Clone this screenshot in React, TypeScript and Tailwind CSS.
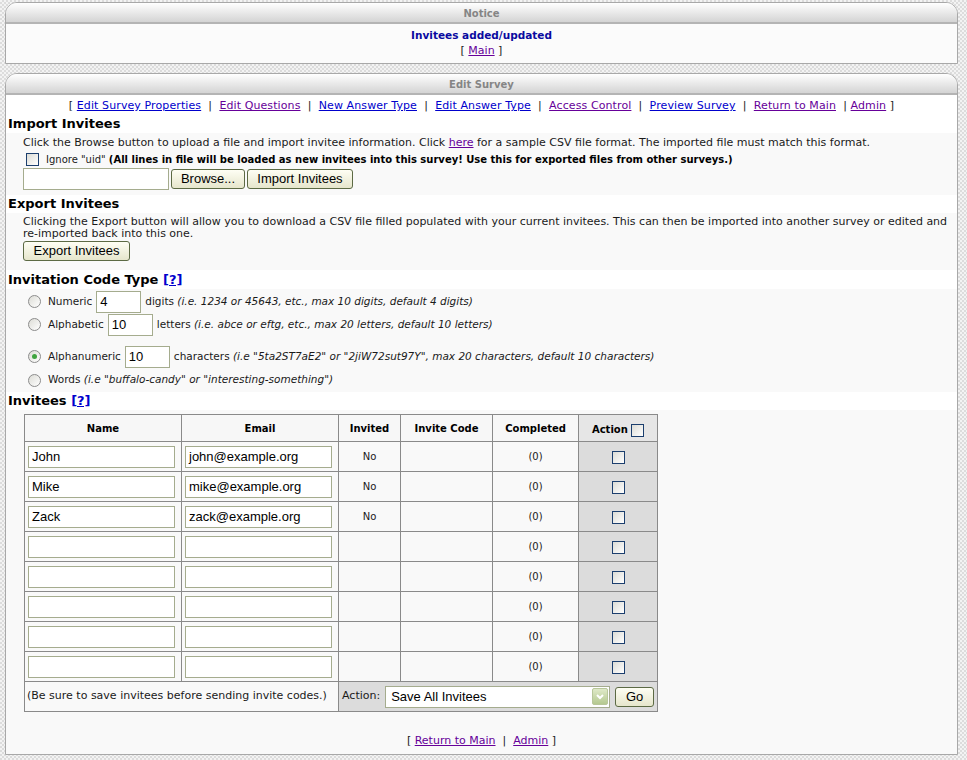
import React from "react";

const Lnk = ({ children, v }: { children: React.ReactNode; v?: boolean }) => (
  <a href="#" className={`underline ${v ? "text-[#660099]" : "text-[#0000cc]"}`}>{children}</a>
);

function Panel({ title, children }: { title: string; children: React.ReactNode }) {
  return (
    <div className="rounded-t-[12px] border border-[#a8a8a8] bg-[#f9f9f9]">
      <div className="h-[21px] rounded-t-[11px] border-b-2 border-[#b4b4b4] bg-gradient-to-b from-white to-[#d4d4d4] text-center text-[10px] font-bold leading-[21px] text-[#858585]">
        {title}
      </div>
      {children}
    </div>
  );
}

const Check = () => (
  <span className="inline-block h-[13px] w-[13px] border border-[#1c3f6e] bg-gradient-to-br from-[#dcdcd6] to-white align-middle" />
);

const Radio = ({ on }: { on?: boolean }) => (
  <span className="inline-flex h-[13px] w-[13px] items-center justify-center rounded-full border border-[#8c8c8c] bg-gradient-to-br from-[#dcdcd6] to-white align-middle">
    {on && <span className="h-[5px] w-[5px] rounded-full bg-[#3fa43f]" />}
  </span>
);

const Btn = ({ children, w }: { children: React.ReactNode; w: string }) => (
  <button className={`${w} h-[20px] rounded-[3px] border border-[#5c6a44] bg-gradient-to-b from-[#fefef4] to-[#e6e6cc] font-['Liberation_Sans',Arial,sans-serif] text-[13px] leading-[18px] text-black`}>
    {children}
  </button>
);

const TextBox = ({ value, w }: { value?: string; w: string }) => (
  <span className={`${w} inline-block h-[22px] border border-[#a5ac8e] bg-white px-[3px] align-middle font-['Liberation_Sans',Arial,sans-serif] text-[13px] leading-[20px] text-black`}>
    {value}
  </span>
);

const rows = [
  { n: "John", e: "john@example.org", i: "No" },
  { n: "Mike", e: "mike@example.org", i: "No" },
  { n: "Zack", e: "zack@example.org", i: "No" },
  { n: "", e: "", i: "" },
  { n: "", e: "", i: "" },
  { n: "", e: "", i: "" },
  { n: "", e: "", i: "" },
  { n: "", e: "", i: "" },
];

export default function App() {
  return (
    <div className="min-h-screen w-[967px] bg-[repeating-conic-gradient(#dcdcdc_0_25%,#f3f3f3_0_50%)] bg-[length:4px_4px] pt-[2px] font-['DejaVu_Sans',Verdana,sans-serif] text-[#1a1a1a]">
      <div className="ml-[5px] w-[953px]">
        <Panel title="Notice">
          <div className="bg-[#fbfbfb] pb-[4px] pt-[3px] text-center">
            <div className="text-[10.5px] font-bold leading-[16px] text-[#0a0aa0]">Invitees added/updated</div>
            <div className="text-[11px] leading-[16px]">
              [ <Lnk v>Main</Lnk> ]
            </div>
          </div>
        </Panel>

        <div className="h-[9px]" />

        <Panel title="Edit Survey">
          <div className="bg-white pb-[2px] pt-[3px] text-center text-[11px] leading-[15px] tracking-[0.1px]">
            [ <Lnk>Edit Survey Properties</Lnk>&nbsp; | &nbsp;<Lnk v>Edit Questions</Lnk>&nbsp; | &nbsp;
            <Lnk>New Answer Type</Lnk>&nbsp; | &nbsp;<Lnk>Edit Answer Type</Lnk>&nbsp; | &nbsp;
            <Lnk v>Access Control</Lnk>&nbsp; | &nbsp;<Lnk>Preview Survey</Lnk>&nbsp; | &nbsp;
            <Lnk v>Return to Main</Lnk>&nbsp; | <Lnk v>Admin</Lnk> ]
          </div>

          {/* Import */}
          <div className="bg-white pl-[2px] text-[13px] font-bold leading-[18px] text-black">Import Invitees</div>
          <div className="pb-[5px] pl-[17px] pt-[1px]">
            <div className="text-[11px] leading-[17px]">
              Click the Browse button to upload a file and import invitee information. Click <Lnk v>here</Lnk> for a sample CSV file
              format. The imported file must match this format.
            </div>
            <div className="flex h-[17px] items-center gap-[7px] pl-[3px] text-[10px]">
              <Check />
              <span>
                Ignore "uid" <b className="text-black">(All lines in file will be loaded as new invitees into this survey! Use this for exported files from other surveys.)</b>
              </span>
            </div>
            <div className="flex items-center gap-[2px]">
              <TextBox w="w-[146px]" />
              <Btn w="w-[74px]">Browse...</Btn>
              <Btn w="w-[106px]">Import Invitees</Btn>
            </div>
          </div>

          {/* Export */}
          <div className="bg-white pl-[2px] text-[13px] font-bold leading-[18px] text-black">Export Invitees</div>
          <div className="pb-[9px] pl-[17px] pt-[3px]">
            <div className="pr-[6px] text-[11px] leading-[12px]">
              Clicking the Export button will allow you to download a CSV file filled populated with your current invitees. This can then be
              imported into another survey or edited and re-imported back into this one.
            </div>
            <div className="flex pt-[1px]">
              <Btn w="w-[107px]">Export Invitees</Btn>
            </div>
          </div>

          {/* Invitation Code Type */}
          <div className="bg-white pl-[2px] pt-[1px] text-[13px] font-bold leading-[18px] text-black">
            Invitation Code Type <Lnk>[?]</Lnk>
          </div>
          <div className="pl-[22px] pt-[1px] text-[10.5px]">
            <div className="flex h-[23px] items-center">
              <Radio />
              <span className="ml-[7px]">Numeric</span>
              <TextBox value="4" w="w-[45px] ml-[4px]" />
              <span className="ml-[4px]">
                digits <i>(i.e. 1234 or 45643, etc., max 10 digits, default 4 digits)</i>
              </span>
            </div>
            <div className="flex h-[23px] items-center">
              <Radio />
              <span className="ml-[7px]">Alphabetic</span>
              <TextBox value="10" w="w-[45px] ml-[4px]" />
              <span className="ml-[4px]">
                letters <i>(i.e. abce or eftg, etc., max 20 letters, default 10 letters)</i>
              </span>
            </div>
            <div className="mt-[9px] flex h-[23px] items-center">
              <Radio on />
              <span className="ml-[7px]">Alphanumeric</span>
              <TextBox value="10" w="w-[45px] ml-[4px]" />
              <span className="ml-[4px]">
                characters <i>(i.e "5ta2ST7aE2" or "2jiW72sut97Y", max 20 characters, default 10 characters)</i>
              </span>
            </div>
            <div className="flex h-[24px] items-center">
              <Radio />
              <span className="ml-[7px]">
                Words <i>(i.e "buffalo-candy" or "interesting-something")</i>
              </span>
            </div>
          </div>

          {/* Invitees */}
          <div className="bg-white pl-[2px] text-[13px] font-bold leading-[18px] text-black">
            Invitees <Lnk>[?]</Lnk>
          </div>
          <div className="pl-[18px] pt-[4px] text-[10px]">
            <table className="border-collapse border border-[#8a8a8a]">
              <thead>
                <tr className="h-[27px] text-[10px] font-bold text-black">
                  <th className="w-[157px] border border-[#8a8a8a] bg-[#f7f7f7]">Name</th>
                  <th className="w-[157px] border border-[#8a8a8a] bg-[#f7f7f7]">Email</th>
                  <th className="w-[62px] border border-[#8a8a8a] bg-[#f7f7f7]">Invited</th>
                  <th className="w-[92px] border border-[#8a8a8a] bg-[#f7f7f7]">Invite Code</th>
                  <th className="w-[86px] border border-[#8a8a8a] bg-[#f7f7f7]">Completed</th>
                  <th className="w-[79px] border border-[#8a8a8a] bg-[#e6e6e6] pt-[4px] leading-[14px]">
                    Action <Check />
                  </th>
                </tr>
              </thead>
              <tbody>
                {rows.map((r, k) => (
                  <tr key={k} className="h-[30px]">
                    <td className="border border-[#8a8a8a] px-[3px]">
                      <TextBox value={r.n} w="w-[147px]" />
                    </td>
                    <td className="border border-[#8a8a8a] px-[3px]">
                      <TextBox value={r.e} w="w-[147px]" />
                    </td>
                    <td className="border border-[#8a8a8a] text-center">{r.i}</td>
                    <td className="border border-[#8a8a8a]" />
                    <td className="border border-[#8a8a8a] text-center">(0)</td>
                    <td className="border border-[#8a8a8a] bg-[#dcdcdc] text-center">
                      <Check />
                    </td>
                  </tr>
                ))}
                <tr className="h-[30px]">
                  <td colSpan={2} className="border border-[#8a8a8a] px-[2px] text-[11px]">
                    (Be sure to save invitees before sending invite codes.)
                  </td>
                  <td colSpan={4} className="border border-[#8a8a8a] bg-[#dcdcdc] px-[3px]">
                    <div className="flex items-center">
                      <span className="text-[11px]">Action:</span>
                      <span className="ml-[5px] flex h-[22px] w-[225px] items-center justify-between border border-[#a5ac8e] bg-white pl-[5px] pr-[1px] font-['Liberation_Sans',Arial,sans-serif] text-[13px] text-black">
                        Save All Invitees
                        <span className="flex h-[17px] w-[16px] items-center justify-center rounded-[2px] border border-[#b8c79a] bg-gradient-to-b from-[#dfe9c8] to-[#b5c990]">
                          <svg width="8" height="6" viewBox="0 0 8 6">
                            <path d="M1 1 L4 4 L7 1" stroke="#ffffff" strokeWidth="2" fill="none" />
                          </svg>
                        </span>
                      </span>
                      <span className="ml-[5px] flex">
                        <Btn w="w-[39px]">Go</Btn>
                      </span>
                    </div>
                  </td>
                </tr>
              </tbody>
            </table>
          </div>
          <div className="pb-[6px] pt-[21px] text-center text-[11px] leading-[15px]">
            [ <Lnk v>Return to Main</Lnk>&nbsp; | &nbsp;<Lnk v>Admin</Lnk> ]
          </div>
        </Panel>
      </div>
    </div>
  );
}
